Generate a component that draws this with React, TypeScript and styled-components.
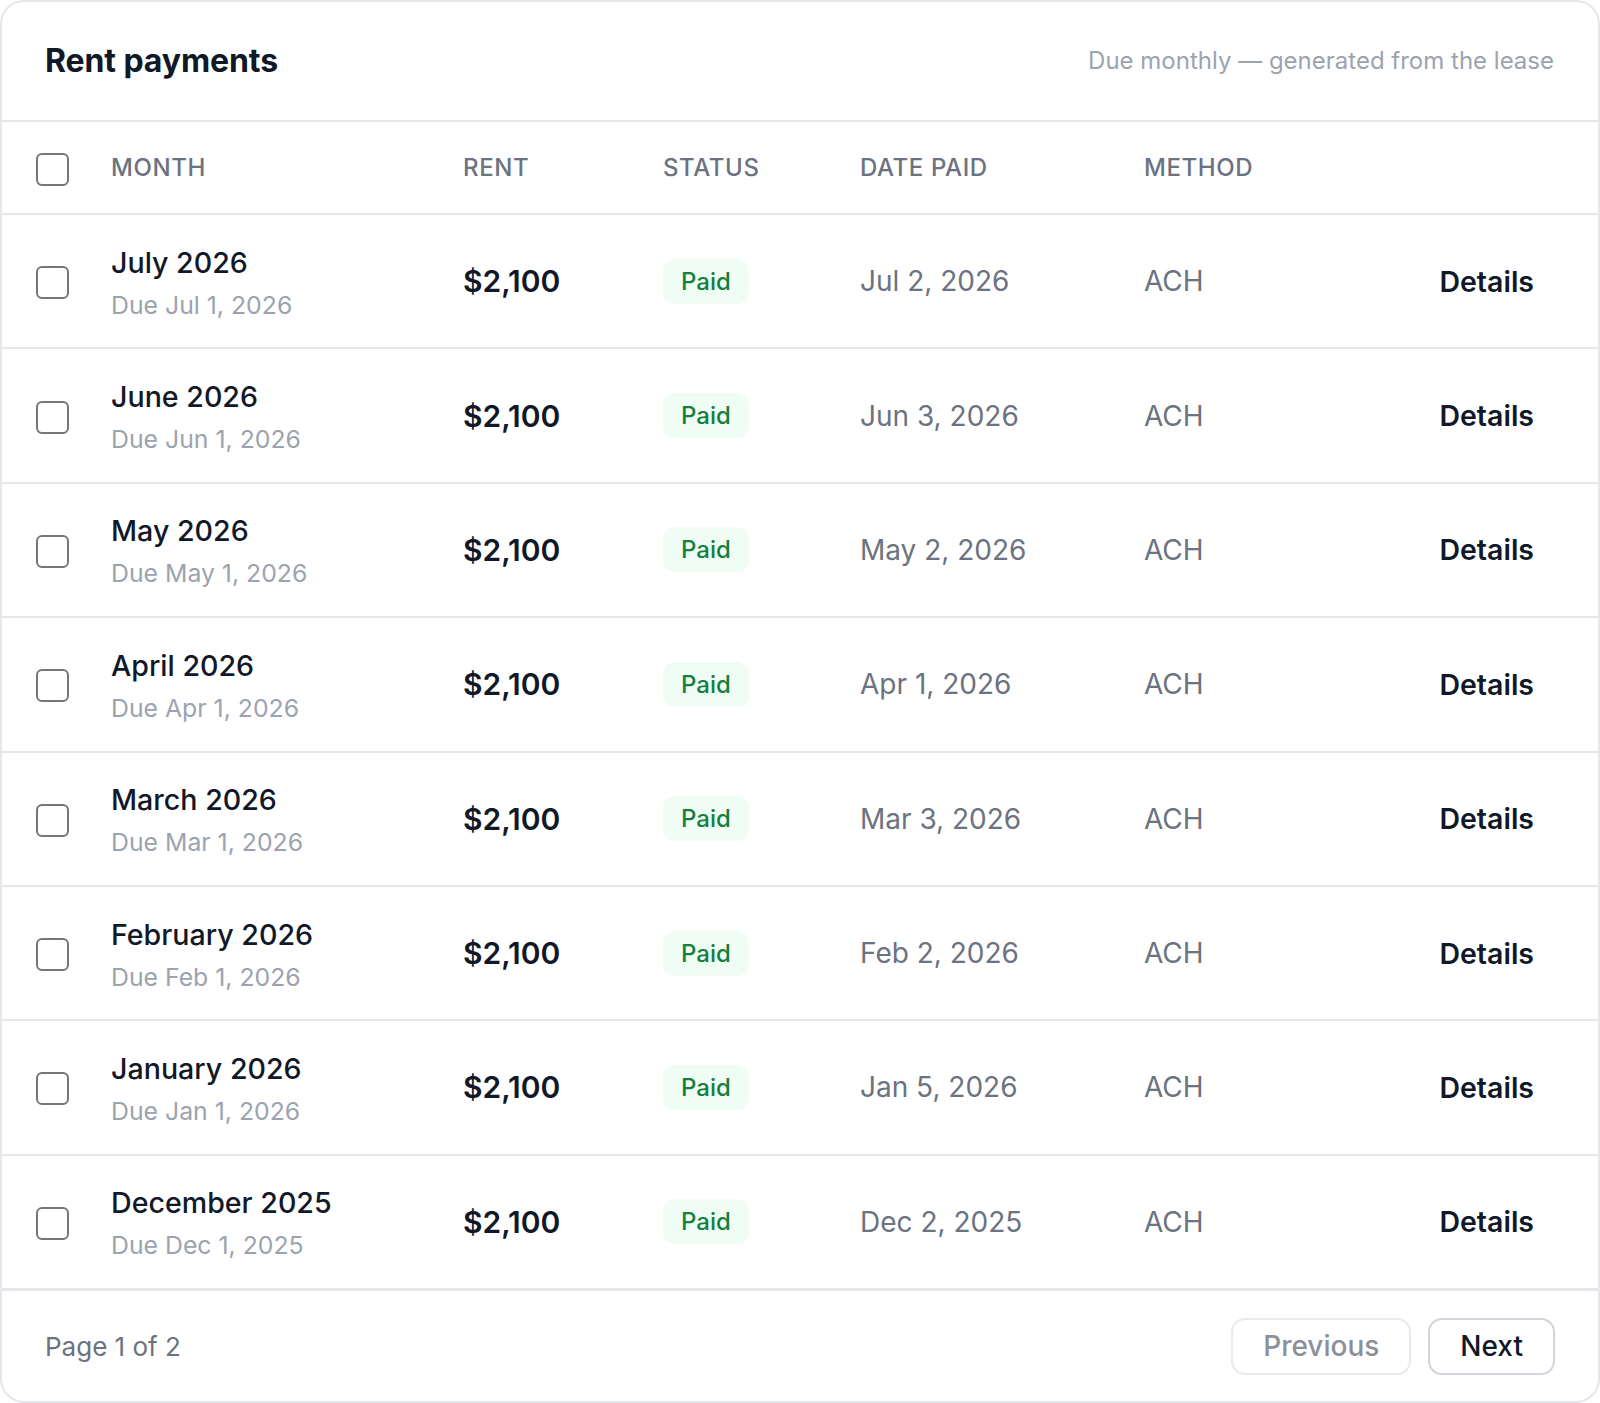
import React from "react";
import styled, { createGlobalStyle } from "styled-components";

const Global = createGlobalStyle`
  html, body { margin: 0; padding: 0; background: #ffffff; }
  body { font-family: Inter, "Noto Sans", "Liberation Sans", sans-serif; -webkit-font-smoothing: antialiased; }
  * { box-sizing: border-box; }
`;

const Card = styled.section`
  width: 1600px;
  border: 2px solid #e5e7eb;
  border-radius: 24px;
  background: #ffffff;
  overflow: hidden;
`;

const CardHeader = styled.header`
  height: 120px;
  display: flex;
  align-items: center;
  justify-content: space-between;
  padding: 0 44px 2px 43px;
  border-bottom: 2px solid #e5e7eb;
`;

const Title = styled.h2`
  margin: 0;
  font-size: 32px;
  font-weight: 700;
  letter-spacing: -0.1px;
  color: #111827;
`;

const Subtitle = styled.span`
  font-size: 24px;
  color: #9ca3af;
`;

const Row = styled.div<{ $head?: boolean }>`
  display: grid;
  grid-template-columns: 75px 352px 200px 197px 284px 1fr auto;
  align-items: center;
  padding: 0 64px 0 34px;
  height: ${(p) => (p.$head ? "93px" : "134.375px")};
  border-bottom: 2px solid #e5e7eb;
`;

const Check = styled.span`
  display: block;
  width: 33px;
  height: 33px;
  margin-top: 3px;
  border: 2px solid #767676;
  border-radius: 6px;
  background: #fff;
`;

const HeadLabel = styled.span`
  font-size: 24px;
  font-weight: 500;
  letter-spacing: 0.6px;
  text-transform: uppercase;
  color: #6b7280;
`;

const MonthCell = styled.div`
  display: flex;
  flex-direction: column;
  gap: 4px;
  padding-top: 3px;
`;

const MonthName = styled.span`
  font-size: 28.6px;
  line-height: 40px;
  font-weight: 500;
  color: #111827;
`;

const DueDate = styled.span`
  font-size: 24.8px;
  line-height: 36px;
  color: #9ca3af;
`;

const Amount = styled.span`
  font-size: 30px;
  font-weight: 600;
  color: #111827;
`;

const Badge = styled.span`
  justify-self: start;
  display: inline-flex;
  align-items: center;
  height: 45px;
  padding: 0 18px;
  border-radius: 12px;
  background: #f0fdf4;
  color: #15803d;
  font-size: 24px;
  font-weight: 500;
`;

const Muted = styled.span`
  font-size: 28px;
  color: #6b7280;
`;

const DetailsLink = styled.span`
  justify-self: end;
  font-size: 28.5px;
  font-weight: 600;
  color: #111827;
`;

const Footer = styled.footer`
  height: 111px;
  display: flex;
  align-items: center;
  justify-content: space-between;
  padding: 0 43px 0 43px;
  border-top: 1px solid #e5e7eb;
`;

const PageInfo = styled.span`
  font-size: 26px;
  color: #6b7280;
`;

const Buttons = styled.div`
  display: flex;
  gap: 17px;
`;

const PagerButton = styled.button<{ $disabled?: boolean }>`
  height: 57px;
  padding: 0 30px;
  border-radius: 14px;
  background: #fff;
  font-family: inherit;
  font-size: 28px;
  font-weight: 500;
  border: 2px solid ${(p) => (p.$disabled ? "#e9eaee" : "#d1d5db")};
  color: ${(p) => (p.$disabled ? "#8b909a" : "#111827")};
`;

const rows = [
  ["July 2026", "Due Jul 1, 2026", "Jul 2, 2026"],
  ["June 2026", "Due Jun 1, 2026", "Jun 3, 2026"],
  ["May 2026", "Due May 1, 2026", "May 2, 2026"],
  ["April 2026", "Due Apr 1, 2026", "Apr 1, 2026"],
  ["March 2026", "Due Mar 1, 2026", "Mar 3, 2026"],
  ["February 2026", "Due Feb 1, 2026", "Feb 2, 2026"],
  ["January 2026", "Due Jan 1, 2026", "Jan 5, 2026"],
  ["December 2025", "Due Dec 1, 2025", "Dec 2, 2025"],
];

export default function App() {
  return (
    <>
      <Global />
      <Card>
        <CardHeader>
          <Title>Rent payments</Title>
          <Subtitle>Due monthly — generated from the lease</Subtitle>
        </CardHeader>
        <Row $head>
          <Check />
          <HeadLabel>Month</HeadLabel>
          <HeadLabel>Rent</HeadLabel>
          <HeadLabel>Status</HeadLabel>
          <HeadLabel>Date paid</HeadLabel>
          <HeadLabel>Method</HeadLabel>
        </Row>
        {rows.map(([month, due, paid]) => (
          <Row key={month}>
            <Check />
            <MonthCell>
              <MonthName>{month}</MonthName>
              <DueDate>{due}</DueDate>
            </MonthCell>
            <Amount>$2,100</Amount>
            <Badge>Paid</Badge>
            <Muted>{paid}</Muted>
            <Muted>ACH</Muted>
            <DetailsLink>Details</DetailsLink>
          </Row>
        ))}
        <Footer>
          <PageInfo>Page 1 of 2</PageInfo>
          <Buttons>
            <PagerButton $disabled>Previous</PagerButton>
            <PagerButton>Next</PagerButton>
          </Buttons>
        </Footer>
      </Card>
    </>
  );
}
